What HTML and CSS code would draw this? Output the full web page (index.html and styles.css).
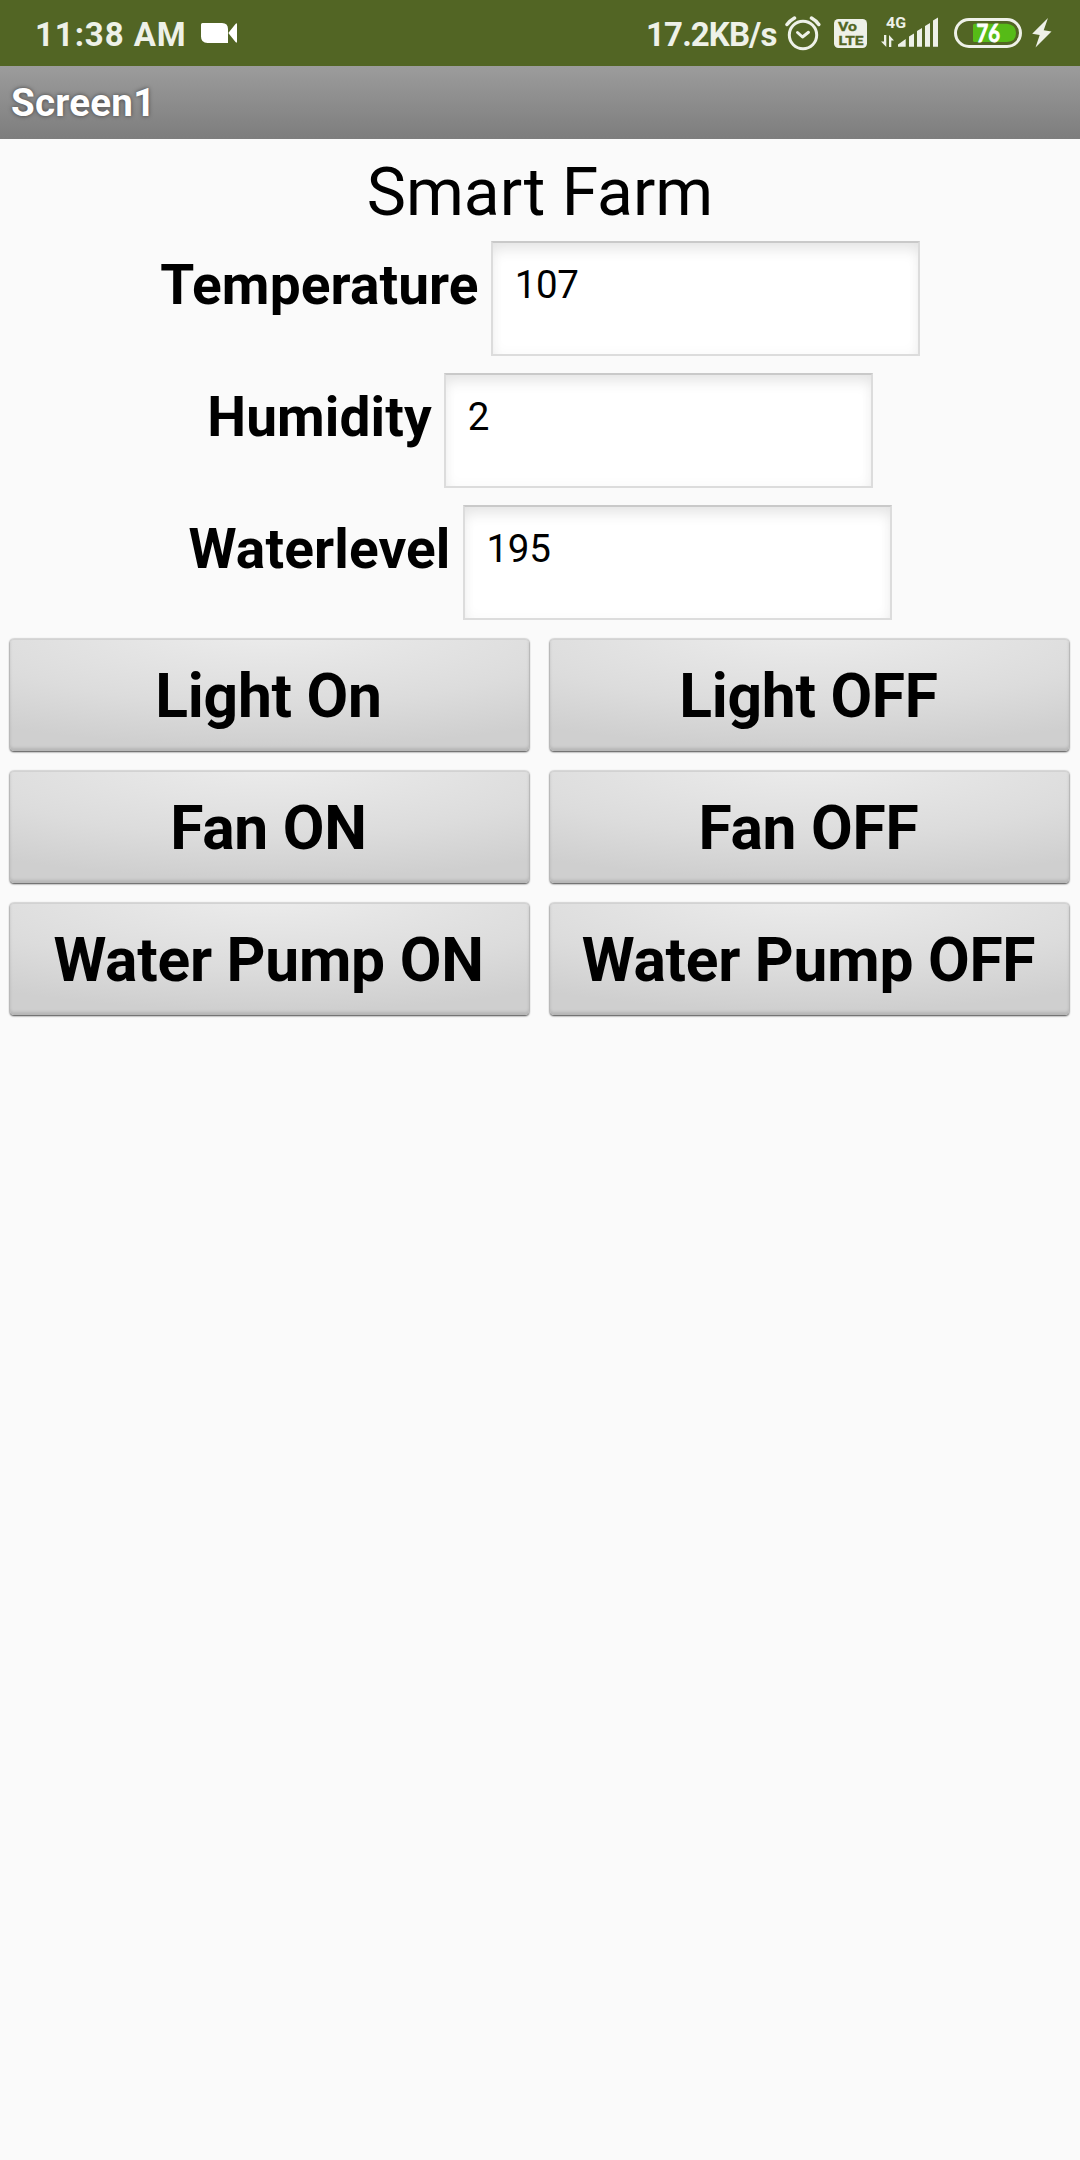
FILE: index.html
```html
<!DOCTYPE html>
<html lang="en">
<head>
<meta charset="utf-8">
<title>Screen1</title>
<link rel="stylesheet" href="styles.css">
</head>
<body>
<header class="status">
  <span class="clock">11:38 AM</span>
  <svg class="camera" width="38" height="66" viewBox="200 0 38 66" fill="#fff"><path d="M202.500 23H222Q228 23 228 29V43H207.500Q201 43 201 36.500V24.500Q201 23 202.500 23ZM228.300 33 235.500 24Q237 22.500 237 24.500V41.500Q237 43.500 235.500 42Z"/></svg>
  <span class="speed">17.2KB/s</span>
  <svg class="alarm" width="36" height="66" viewBox="785 0 36 66" fill="none" stroke="#eef1e8" stroke-width="3" stroke-linecap="round" stroke-linejoin="round"><circle cx="803" cy="35" r="13.700"/><path d="M797.500 32.500 802.500 37 808.500 32.300"/><path d="M787 24.500Q790 20.500 794.500 18M811.500 18Q816 20.500 818.800 24.500" stroke-width="3.500"/></svg>
  <svg class="volte" width="33" height="66" viewBox="834 0 33 66"><rect x="834" y="19" width="33" height="29" rx="4.500" fill="#eef1e8"/><text x="838" y="31.300" textLength="19" lengthAdjust="spacingAndGlyphs">Vo</text><text x="838.500" y="45" textLength="25" lengthAdjust="spacingAndGlyphs">LTE</text></svg>
  <svg class="signal" width="60" height="66" viewBox="880 0 60 66" fill="#eef1e8"><text x="886" y="28" textLength="20" lengthAdjust="spacingAndGlyphs">4G</text><path d="M884 35h2.300v12L881 41.500h3ZM889 47V35l5 5.500h-2.700V47ZM898 46.700V44.500L905.700 39V46.700ZM909 46.700V36.500L914 33.500V46.700ZM917 46.700V31L922 28V46.700ZM925 46.700V26L930 23V46.700ZM933 46.700V20.500L938 17.500V46.700Z"/></svg>
  <svg class="battery" width="68" height="66" viewBox="954 0 68 66"><rect x="955.500" y="19.500" width="65" height="27" rx="13.500" fill="none" stroke="#eef1e8" stroke-width="3"/><path d="M974.500 23.700H1007Q1016 24.500 1016 33T1007 42H974.500Q973 42 973 40.500V25.200Q973 23.700 974.500 23.700Z" fill="#56bb17"/><text x="976.500" y="41.500" textLength="23.500" lengthAdjust="spacingAndGlyphs">76</text></svg>
  <svg class="bolt" width="20" height="66" viewBox="1032 0 20 66" fill="#eef1e8"><path d="M1048 18 1032.200 33.700 1039.700 35 1035.500 47.500 1051.500 31.500 1043.700 30.300Z"/></svg>
</header>
<div class="titlebar">Screen1</div>
<main class="content">
  <h1 class="heading">Smart Farm</h1>
  <div class="reading"><span class="label">Temperature</span><div class="field">107</div></div>
  <div class="reading"><span class="label">Humidity</span><div class="field">2</div></div>
  <div class="reading"><span class="label">Waterlevel</span><div class="field">195</div></div>
  <div class="controls">
    <button class="btn">Light On</button><button class="btn">Light OFF</button>
    <button class="btn">Fan ON</button><button class="btn">Fan OFF</button>
    <button class="btn">Water Pump ON</button><button class="btn">Water Pump OFF</button>
  </div>
</main>
</body>
</html>
```
FILE: styles.css
```css
* { box-sizing: border-box; }

body {
  margin: 0;
  min-height: 2160px;
  background: #fafafa;
  color: #000;
  font-family: Roboto, sans-serif;
}

.status {
  display: flex;
  height: 66px;
  background: #526524;
  color: #eef1e8;
  font-size: 33px;
  font-weight: 700;
  line-height: 69px;
  white-space: nowrap;
}

.status svg { flex: none; }
.clock { width: 165px; margin-left: 35px; letter-spacing: .9px; }
.speed { margin-left: auto; letter-spacing: -.9px; }
.alarm { margin-left: 8.500px; }
.volte { margin-left: 13px; }
.volte text { font: 700 12.4px Roboto, sans-serif; fill: #526524; stroke: #526524; stroke-width: .3px; }
.signal { margin-left: 13px; }
.signal text { font: 700 15.500px Roboto, sans-serif; }
.battery { margin-left: 14px; }
.battery text { font: 700 24px Lato, sans-serif; fill: #fff; stroke: #fff; stroke-width: .8px; }
.bolt { margin: 0 28px 0 10px; }

.titlebar {
  height: 73px;
  padding-left: 11px;
  background: linear-gradient(#9c9c9c, #7d7d7d);
  color: #fff;
  font-size: 38.5px;
  font-weight: 700;
  letter-spacing: .25px;
  line-height: 73px;
  text-shadow: 0 0 4px rgba(0, 0, 0, .55);
}

.content { padding-top: 15px; }

.heading {
  margin: 0;
  height: 79px;
  font-size: 66px;
  font-weight: 400;
  line-height: 78px;
  text-align: center;
}

.reading {
  display: flex;
  justify-content: center;
  gap: 12px;
  height: 132px;
  padding-top: 8px;
}

.label {
  padding-top: 12px;
  font-size: 55px;
  font-weight: 700;
  letter-spacing: .12px;
  line-height: 64px;
}

.field {
  width: 429px;
  height: 115px;
  padding: 19px 22px;
  border: 2px solid #dcdcdc;
  border-top-color: #c9c9c9;
  background: #fff;
  box-shadow: inset 0 10px 14px -3px rgba(0, 0, 0, .09), inset 0 0 14px rgba(0, 0, 0, .03);
  font-size: 38.5px;
  letter-spacing: -.3px;
  line-height: 46px;
}

.controls {
  display: grid;
  grid-template-columns: 1fr 1fr;
  grid-auto-rows: 112px;
  gap: 20px 21px;
  padding: 10px 11px 10px 10px;
}

.btn {
  padding: 4px 2px 0 0;
  border: 0;
  border-radius: 4px;
  background: radial-gradient(ellipse 110% 125% at 50% -10%, #ededed, #dcdcdc 55%, #cfcfcf 85%);
  box-shadow: inset 0 1px 0 #d2d2d2, inset 0 -3px 3px rgba(0, 0, 0, .12), 0 0 2px rgba(0, 0, 0, .4), 0 1px 2px rgba(0, 0, 0, .65);
  color: #000;
  font: 700 60.5px/70px Roboto, sans-serif;
  letter-spacing: -.25px;
  white-space: nowrap;
}
```
